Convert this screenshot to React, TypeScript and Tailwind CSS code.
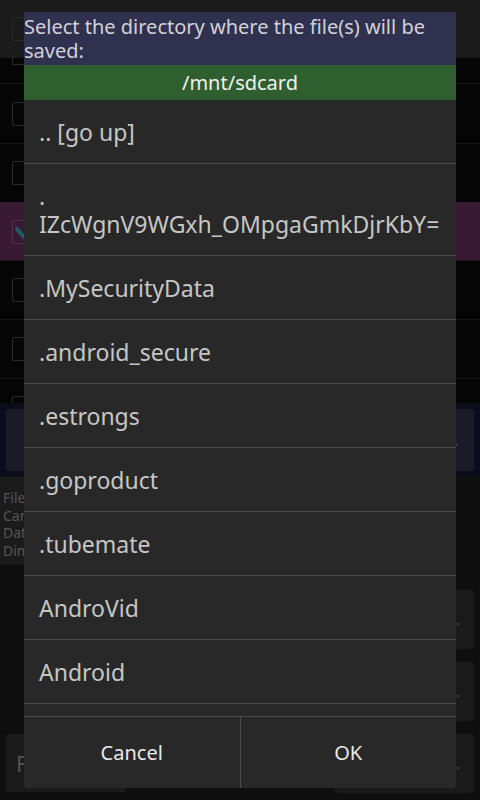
import React from 'react';

const folders = [
  '.MySecurityData',
  '.android_secure',
  '.estrongs',
  '.goproduct',
  '.tubemate',
  'AndroVid',
  'Android',
  'DCIM',
];

function Box({ checked = false, tone = 'dark' }: { checked?: boolean; tone?: 'dark' | 'purple' }) {
  return (
    <div
      className={`relative w-[24px] h-[24px] rounded-[2px] border ${
        tone === 'purple' ? 'border-[#54304f]' : 'border-[#2a2a2a]'
      }`}
    >
      {checked && (
        <svg className="absolute left-[2px] top-[5px] w-[14px] h-[14px]" viewBox="0 0 14 14">
          <path d="M2 3 L9 11" stroke="#1f5c68" strokeWidth="4" strokeLinecap="round" fill="none" />
        </svg>
      )}
    </div>
  );
}

function BgRow({ h, purple = false }: { h: string; purple?: boolean }) {
  return (
    <div
      className={`${h} flex items-center pl-3 border-t ${
        purple ? 'bg-[#3a1935] border-[#3a1935]' : 'bg-[#050505] border-[#181818]'
      }`}
    >
      <Box checked={purple} tone={purple ? 'purple' : 'dark'} />
    </div>
  );
}

export default function App() {
  return (
    <div
      className="relative w-[480px] h-[800px] overflow-hidden bg-[#0f0f0f]"
      style={{ fontFamily: '"Noto Sans", "Open Sans", sans-serif' }}
    >
      {/* Background: dimmed file list behind the dialog */}
      <div className="flex flex-col">
        <div className="h-[58px] bg-[#1b1b1b] pl-3 pt-[17px]">
          <Box />
        </div>
        <div className="h-[25px] bg-[#050505] pl-3">
          <div className="w-[24px] h-[7px] border-x border-b border-[#2a2a2a] rounded-b-[2px]" />
        </div>
        <BgRow h="h-[60px]" />
        <BgRow h="h-[59px]" />
        <BgRow h="h-[58px]" purple />
        <BgRow h="h-[59px]" />
        <BgRow h="h-[59px]" />
        <div className="h-[25px] bg-[#050505] border-t border-[#181818] pl-3 pt-[17px]">
          <div className="w-[24px] h-[8px] border-x border-t border-[#2a2a2a] rounded-t-[2px]" />
        </div>

        {/* navy action strip */}
        <div className="h-[74px] bg-[#0c0c1c] px-[6px] py-[6px]">
          <div className="h-full rounded-[3px] bg-[#1a1a29] flex items-center justify-end pr-[14px]">
            <span className="text-[#5c5c66] text-[14px] tracking-[2px]">...</span>
          </div>
        </div>

        {/* info block, mostly hidden by the dialog */}
        <div className="h-[88px] w-[300px] bg-[#1b1b1b] pl-[3px] pt-[12px] text-[14px] leading-[17.5px] text-[#555555] whitespace-nowrap">
          <div>File</div>
          <div>Cam</div>
          <div>Date</div>
          <div>Dim</div>
        </div>

        <div className="flex justify-between h-[235px]">
          <div className="flex flex-col justify-end pl-[6px] pb-[8px]">
            <div className="w-[120px] h-[58px] rounded-[3px] bg-[#1b1b1b] flex items-center pl-[10px] text-[22px] text-[#555555]">
              F
            </div>
          </div>
          <div className="flex flex-col gap-[13px] pt-[25px] pr-[6px]">
            {[0, 1, 2].map((i) => (
              <div
                key={i}
                className="w-[140px] h-[59px] rounded-[3px] bg-[#1a1a1a] flex items-center justify-end pr-[12px]"
              >
                <span className="text-[#5a5a5a] text-[14px] tracking-[2px]">...</span>
              </div>
            ))}
          </div>
        </div>
      </div>

      {/* Directory chooser dialog */}
      <div className="absolute left-[24px] top-[12px] w-[432px] flex flex-col bg-[#282828] rounded-b-[3px] overflow-hidden">
        <div className="bg-[#30304f] text-[#d2d2d6] text-[20px] leading-[24px] pt-[3px] pb-[2px]">
          Select the directory where the file(s) will be saved:
        </div>
        <div className="bg-[#2f5f2f] text-[#f0f0f0] text-[20px] leading-[35px] h-[35px] text-center">
          /mnt/sdcard
        </div>

        <div className="h-[616px] overflow-hidden">
          <div className="h-[64px] flex items-center pl-[15px] border-b border-[#4b4b4b] text-[23px] leading-[28px] text-[#c6c6c6]">
            .. [go up]
          </div>
          <div className="h-[92px] flex items-center pl-[15px] border-b border-[#4b4b4b] text-[23px] leading-[28px] text-[#c6c6c6] whitespace-nowrap">
            <div>
              .
              <br />
              IZcWgnV9WGxh_OMpgaGmkDjrKbY=
            </div>
          </div>
          {folders.map((name) => (
            <div
              key={name}
              className="h-[64px] flex items-center pl-[15px] border-b border-[#4b4b4b] text-[23px] leading-[28px] text-[#c6c6c6]"
            >
              {name}
            </div>
          ))}
        </div>

        <div className="flex border-t border-[#4b4b4b] h-[72px]">
          <button className="flex-1 flex items-center justify-center border-r border-[#4b4b4b] text-[20px] text-[#e8e8e8]">
            Cancel
          </button>
          <button className="flex-1 flex items-center justify-center text-[20px] text-[#e8e8e8]">
            OK
          </button>
        </div>
      </div>
    </div>
  );
}
